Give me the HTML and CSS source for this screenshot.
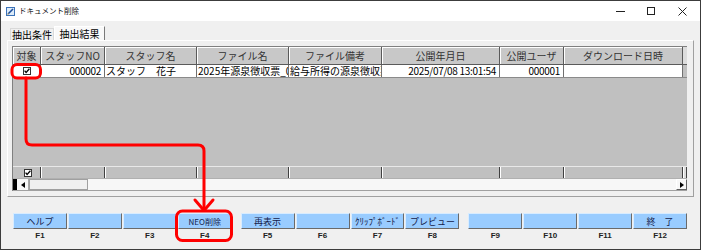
FILE: index.html
```html
<!DOCTYPE html>
<html lang="ja">
<head>
  <meta charset="UTF-8" />
  <title>ドキュメント削除</title>
  <link rel="stylesheet" href="styles.css">
</head>
<body>

  <div class="window">
    <div class="titlebar">
      <svg class="app-icon" width="9" height="9" viewBox="0 0 9 9">
        <rect x="0.5" y="0.5" width="8" height="8" fill="#dcebf9" stroke="#3b72b8" />
        <path d="M2 7 L7 2" stroke="#1c4d9c" stroke-width="1.6" />
        <path d="M1.5 7.5 L2.5 6.5" stroke="#e0a020" stroke-width="1" />
      </svg>
      <span class="title">ドキュメント削除</span>
      <div class="controls">
        <svg width="31" height="20" viewBox="0 0 31 20"><path d="M11 10.5 H20" stroke="#222" /></svg>
        <svg width="31" height="20" viewBox="0 0 31 20"><rect x="11.5" y="6.5" width="7" height="7" fill="none" stroke="#222" /></svg>
        <svg width="31" height="20" viewBox="0 0 31 20"><path d="M11.5 6.5 L19.5 14.5 M19.5 6.5 L11.5 14.5" stroke="#222" /></svg>
      </div>
    </div>

    <div class="content">
      <div class="tabs">
        <div class="tab">抽出条件</div>
        <div class="tab active">抽出結果</div>
      </div>

      <div class="panel">
        <div class="grid">
          <div class="grid-row grid-head">
            <div class="cell">対象</div>
            <div class="cell">スタッフNO</div>
            <div class="cell">スタッフ名</div>
            <div class="cell">ファイル名</div>
            <div class="cell">ファイル備考</div>
            <div class="cell">公開年月日</div>
            <div class="cell">公開ユーザ</div>
            <div class="cell">ダウンロード日時</div>
            <div class="cell cell-rest"></div>
          </div>

          <div class="grid-row grid-data">
            <div class="cell cell-check">
              <svg width="8" height="8" viewBox="0 0 8 8">
                <rect x="0.5" y="0.5" width="7" height="7" fill="#fff" stroke="#333" />
                <path d="M1.6 3.6 L3.1 5.4 L6.4 1.8" fill="none" stroke="#000" stroke-width="1.3" />
              </svg>
            </div>
            <div class="cell num">000002</div>
            <div class="cell">スタッフ　花子</div>
            <div class="cell clip">2025年源泉徴収票_01</div>
            <div class="cell clip">給与所得の源泉徴収票</div>
            <div class="cell num">2025/07/08 13:01:54</div>
            <div class="cell num">000001</div>
            <div class="cell"></div>
            <div class="cell cell-rest"></div>
          </div>

          <div class="grid-empty"></div>

          <div class="grid-row grid-foot">
            <div class="cell cell-check">
              <svg width="8" height="8" viewBox="0 0 8 8">
                <rect x="0.5" y="0.5" width="7" height="7" fill="#fff" stroke="#333" />
                <path d="M1.6 3.6 L3.1 5.4 L6.4 1.8" fill="none" stroke="#000" stroke-width="1.3" />
              </svg>
            </div>
            <div class="cell"></div>
            <div class="cell"></div>
            <div class="cell"></div>
            <div class="cell"></div>
            <div class="cell"></div>
            <div class="cell"></div>
            <div class="cell"></div>
            <div class="cell cell-rest"></div>
          </div>

          <div class="hscroll">
            <div class="hscroll-mark"></div>
            <div class="hscroll-btn">
              <svg width="4" height="6" viewBox="0 0 4 6"><path d="M4 0 V6 L0 3 Z" fill="#000" /></svg>
            </div>
            <div class="hscroll-thumb"></div>
            <div class="hscroll-track"></div>
            <div class="hscroll-btn right">
              <svg width="4" height="6" viewBox="0 0 4 6"><path d="M0 0 V6 L4 3 Z" fill="#000" /></svg>
            </div>
          </div>
        </div>
      </div>

      <div class="fkeys">
        <div class="fgroup">
          <div class="fkey"><button class="fbtn">ヘルプ</button><span class="flabel">F1</span></div>
          <div class="fkey"><button class="fbtn"></button><span class="flabel">F2</span></div>
          <div class="fkey"><button class="fbtn"></button><span class="flabel">F3</span></div>
          <div class="fkey"><button class="fbtn small">NEO削除</button><span class="flabel">F4</span></div>
        </div>
        <div class="fgroup">
          <div class="fkey"><button class="fbtn">再表示</button><span class="flabel">F5</span></div>
          <div class="fkey"><button class="fbtn"></button><span class="flabel">F6</span></div>
          <div class="fkey"><button class="fbtn">ｸﾘｯﾌﾟﾎﾞｰﾄﾞ</button><span class="flabel">F7</span></div>
          <div class="fkey"><button class="fbtn">プレビュー</button><span class="flabel">F8</span></div>
        </div>
        <div class="fgroup">
          <div class="fkey"><button class="fbtn"></button><span class="flabel">F9</span></div>
          <div class="fkey"><button class="fbtn"></button><span class="flabel">F10</span></div>
          <div class="fkey"><button class="fbtn"></button><span class="flabel">F11</span></div>
          <div class="fkey"><button class="fbtn">終　了</button><span class="flabel">F12</span></div>
        </div>
      </div>
    </div>

    <!-- red callout drawn over the window -->
    <svg class="annot" width="701" height="250" viewBox="0 0 701 250">
      <g fill="none" stroke="#ff0000" stroke-width="3" stroke-linecap="round" stroke-linejoin="round">
        <rect x="12" y="64.5" width="28.5" height="13.5" rx="5" />
        <path d="M26 78 V139 Q26 145 32 145 H198 Q204 145 204 151 V210" />
        <path d="M195 200 L204 210.5 L213 200" />
        <rect x="176.5" y="211" width="55" height="29.5" rx="6" />
      </g>
    </svg>
  </div>

</body>
</html>
```

FILE: styles.css
```css
* {
  box-sizing: border-box;
}

body {
  margin: 0;
  background: #fff;
  font-family: "Noto Sans CJK JP", "Noto Sans", sans-serif;
}

.window {
  position: relative;
  width: 701px;
  height: 250px;
  border: 1px solid #3c3c3c;
  background: #f0f0f0;
  display: flex;
  flex-direction: column;
}

/* title bar */
.titlebar {
  height: 20px;
  background: #fff;
  display: flex;
  align-items: center;
  padding-left: 5px;
  padding-right: 2px;
}

.app-icon {
  margin-right: 4px;
}

.title {
  font-size: 7.5px;
  line-height: 10px;
  color: #111;
}

.controls {
  margin-left: auto;
  display: flex;
}

/* body */
.content {
  flex: 1;
  padding: 5px 6px 0;
  display: flex;
  flex-direction: column;
}

.tabs {
  height: 14px;
  display: flex;
  align-items: flex-end;
  padding-left: 3px;
}

.tab {
  width: 44px;
  height: 12px;
  font-size: 10px;
  line-height: 11px;
  text-align: center;
  color: #000;
  border: 1px solid #d9d9d9;
  border-bottom: none;
  background: #f0f0f0;
}

.tab.active {
  width: 51px;
  height: 14px;
  line-height: 13px;
  background: #f9f9f9;
  border-color: #fff #7a7a7a transparent #fff;
}

.panel {
  height: 157px;
  padding: 5px 4px 4px;
  border: 1px solid;
  border-color: #fff #a0a0a0 #a0a0a0 #fff;
}

/* data grid */
.grid {
  width: 675px;
  height: 145px;
  display: flex;
  flex-direction: column;
  background: #c0c0c0;
  border-left: 1px solid #808080;
  border-top: 1px solid #808080;
}

.grid-row {
  display: grid;
  grid-template-columns: 28px 64px 92px 92px 93px 118px 64px 119px 1fr;
}

.cell {
  white-space: nowrap;
}

.cell.clip {
  overflow-x: clip;
}

.grid-head {
  height: 18px;
  background: #c8c8c8;
  border-bottom: 1px solid #5a5a5a;
}

.grid-head .cell {
  font-size: 10px;
  line-height: 17px;
  text-align: center;
  color: #333;
  border-right: 1px solid #5a5a5a;
  box-shadow: inset 1px 1px 0 #fff;
}

.grid-head .cell-rest,
.grid-foot .cell-rest {
  background: #dcdcdc;
  box-shadow: none;
  border-right: none;
}

.grid-data {
  height: 13px;
  background: #fff;
  border-bottom: 1px solid #8a8a8a;
}

.grid-data .cell {
  font-size: 10px;
  line-height: 12px;
  color: #000;
  padding-left: 1px;
  border-right: 1px solid #707070;
}

.grid-data .num {
  text-align: right;
  padding-right: 3px;
  letter-spacing: -0.3px;
}

.grid-data .cell-rest {
  border-right: none;
  background: #c0c0c0;
}

.cell-check {
  display: flex;
  justify-content: center;
  align-items: center;
}

.grid-empty {
  flex: 1;
}

.grid-foot {
  height: 12px;
  border-top: 1px solid #e8e8e8;
}

.grid-foot .cell {
  border-right: 1px solid #404040;
  box-shadow: inset 1px 0 0 #fff;
}

.grid-foot .cell-check {
  box-shadow: none;
  padding-left: 2px;
}

/* horizontal scroll bar */
.hscroll {
  height: 13px;
  display: flex;
  background: #f7f7f7;
  border-top: 1px solid #b0b0b0;
  border-bottom: 1px solid #a0a0a0;
}

.hscroll-mark {
  width: 4px;
  background: #000;
}

.hscroll-btn {
  width: 12px;
  display: flex;
  align-items: center;
  justify-content: center;
  border-right: 1px solid #a8a8a8;
}

.hscroll-btn.right {
  width: 11px;
  border: 1px solid;
  border-color: #fff #606060 #606060 #fff;
}

.hscroll-thumb {
  width: 59px;
  background: #f0f0f0;
  border: 1px solid #a0a0a0;
}

.hscroll-track {
  flex: 1;
}

/* function keys */
.fkeys {
  width: 680px;
  margin-top: 16px;
  padding-left: 6px;
  display: flex;
  gap: 9px;
}

.fgroup {
  flex: 1;
  display: grid;
  grid-template-columns: repeat(4, 1fr);
  gap: 1px;
}

.fkey {
  display: flex;
  flex-direction: column;
}

.fbtn {
  height: 16px;
  padding: 0;
  background: #99ccff;
  border: 1px solid;
  border-color: #d8ecff #6a6a6a #6a6a6a #d8ecff;
  font-family: "Noto Sans CJK JP", sans-serif;
  font-size: 9px;
  line-height: 13px;
  color: #14204a;
  white-space: nowrap;
  overflow: hidden;
}

.fbtn.small {
  font-size: 8px;
}

.flabel {
  padding-top: 1px;
  font-family: "Liberation Sans", sans-serif;
  font-size: 8px;
  font-weight: bold;
  line-height: 11px;
  text-align: center;
  color: #222;
}

.annot {
  position: absolute;
  left: -1px;
  top: -1px;
  pointer-events: none;
}
```
